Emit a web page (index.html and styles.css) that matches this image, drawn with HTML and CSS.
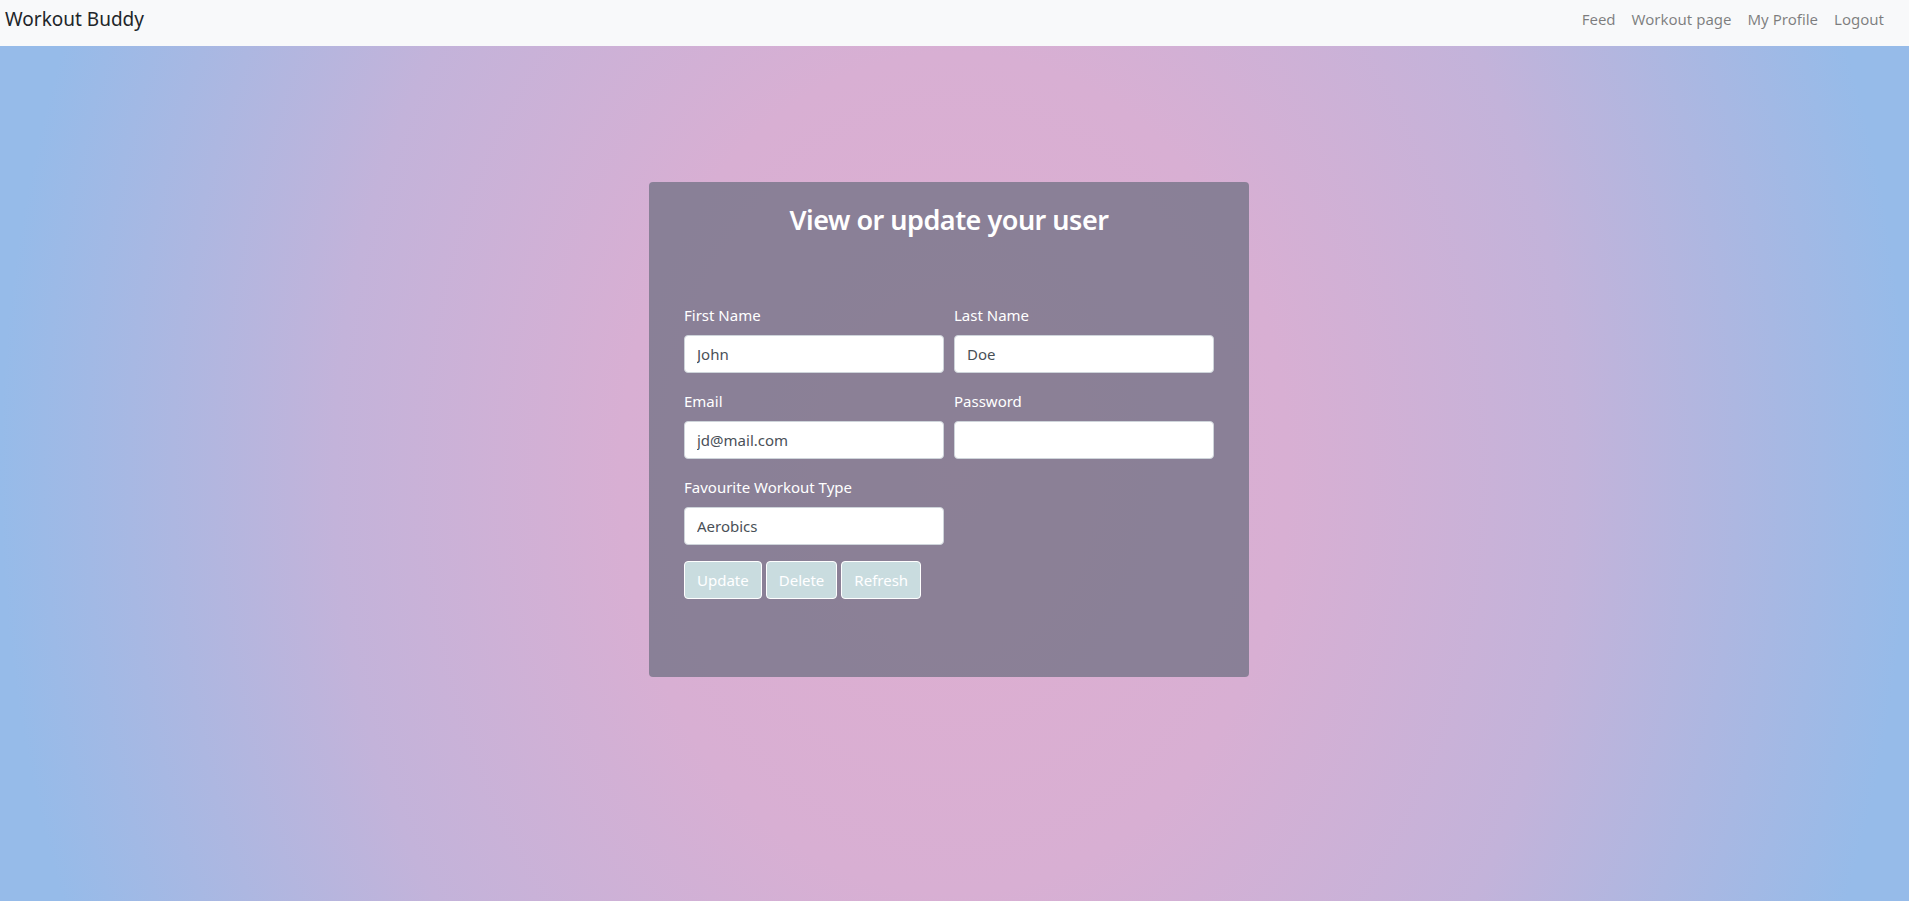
FILE: index.html
```html
<!DOCTYPE html>
<html lang="en">
<head>
<meta charset="utf-8">
<title>Workout Buddy</title>
<link rel="stylesheet" href="styles.css">
</head>
<body>
<nav class="navbar">
  <a class="brand" href="#">Workout Buddy</a>
  <ul class="nav-links">
    <li><a href="#">Feed</a></li>
    <li><a href="#">Workout page</a></li>
    <li><a href="#">My Profile</a></li>
    <li><a href="#">Logout</a></li>
  </ul>
</nav>
<main class="page">
  <div class="card-wrap">
    <section class="card">
      <h2 class="card-title">View or update your user</h2>
      <form class="form">
        <div class="form-row">
          <div class="form-group">
            <label>First Name</label>
            <input class="input" type="text" value="John">
          </div>
          <div class="form-group">
            <label>Last Name</label>
            <input class="input" type="text" value="Doe">
          </div>
        </div>
        <div class="form-row">
          <div class="form-group">
            <label>Email</label>
            <input class="input" type="text" value="jd@mail.com">
          </div>
          <div class="form-group">
            <label>Password</label>
            <input class="input" type="password" value="">
          </div>
        </div>
        <div class="form-row">
          <div class="form-group">
            <label>Favourite Workout Type</label>
            <input class="input" type="text" value="Aerobics">
          </div>
        </div>
        <div class="buttons">
          <button type="button" class="btn">Update</button>
          <button type="button" class="btn">Delete</button>
          <button type="button" class="btn">Refresh</button>
        </div>
      </form>
    </section>
  </div>
</main>
</body>
</html>
```
FILE: styles.css
```css
* { box-sizing: border-box; }
html, body { margin: 0; padding: 0; }
body {
  font-family: "Segoe UI", "Noto Sans", "Open Sans", sans-serif;
  font-size: 15px;
  line-height: 1.5;
  color: #212529;
  background: #f8f9fa;
}
.navbar {
  height: 46px;
  background: #f8f9fa;
  display: flex;
  align-items: center;
  justify-content: space-between;
  padding: 0 17px 8px 5px;
}
.brand {
  font-size: 19px;
  color: #212529;
  text-decoration: none;
  line-height: 30px;
}
.nav-links {
  list-style: none;
  margin: 0;
  padding: 0;
  display: flex;
}
.nav-links a {
  display: block;
  padding: 0 8px;
  color: rgba(0, 0, 0, 0.5);
  text-decoration: none;
  font-size: 15px;
  line-height: 24px;
}
.page {
  height: 855px;
  background: radial-gradient(ellipse 50% 140% at 50% 50%, #dfaed0 0%, #d8afd3 35%, #c3b3da 65%, #adb7e1 82%, #96bbe9 100%);
  padding-top: 136px;
}
.card-wrap {
  padding-right: 11px;
}
.card {
  width: 600px;
  height: 495px;
  margin: 0 auto;
  background: rgba(104, 108, 126, 0.7);
  border-radius: 4px;
  padding: 19px 35px 18px;
}
.card-title {
  margin: 0 0 64px;
  text-align: center;
  color: #fff;
  font-size: 27px;
  font-weight: 600;
  letter-spacing: -0.5px;
  line-height: 38px;
}
.form-row {
  display: grid;
  grid-template-columns: 260px 260px;
  column-gap: 10px;
}
.form-group {
  margin-bottom: 16px;
}
.form-group label {
  display: block;
  color: #fff;
  font-size: 15px;
  line-height: 24px;
  margin-bottom: 8px;
}
.input {
  display: block;
  width: 100%;
  height: 38px;
  padding: 6px 12px;
  font-family: inherit;
  font-size: 15px;
  color: #495057;
  background: #fff;
  border: 1px solid #ced4da;
  border-radius: 4px;
}
.buttons {
  display: flex;
  gap: 4px;
}
.btn {
  height: 38px;
  padding: 6px 12px;
  font-family: inherit;
  font-size: 15px;
  line-height: 24px;
  color: #fff;
  background: #c9dcdf;
  border: 1px solid #fff;
  border-radius: 4px;
}
```
